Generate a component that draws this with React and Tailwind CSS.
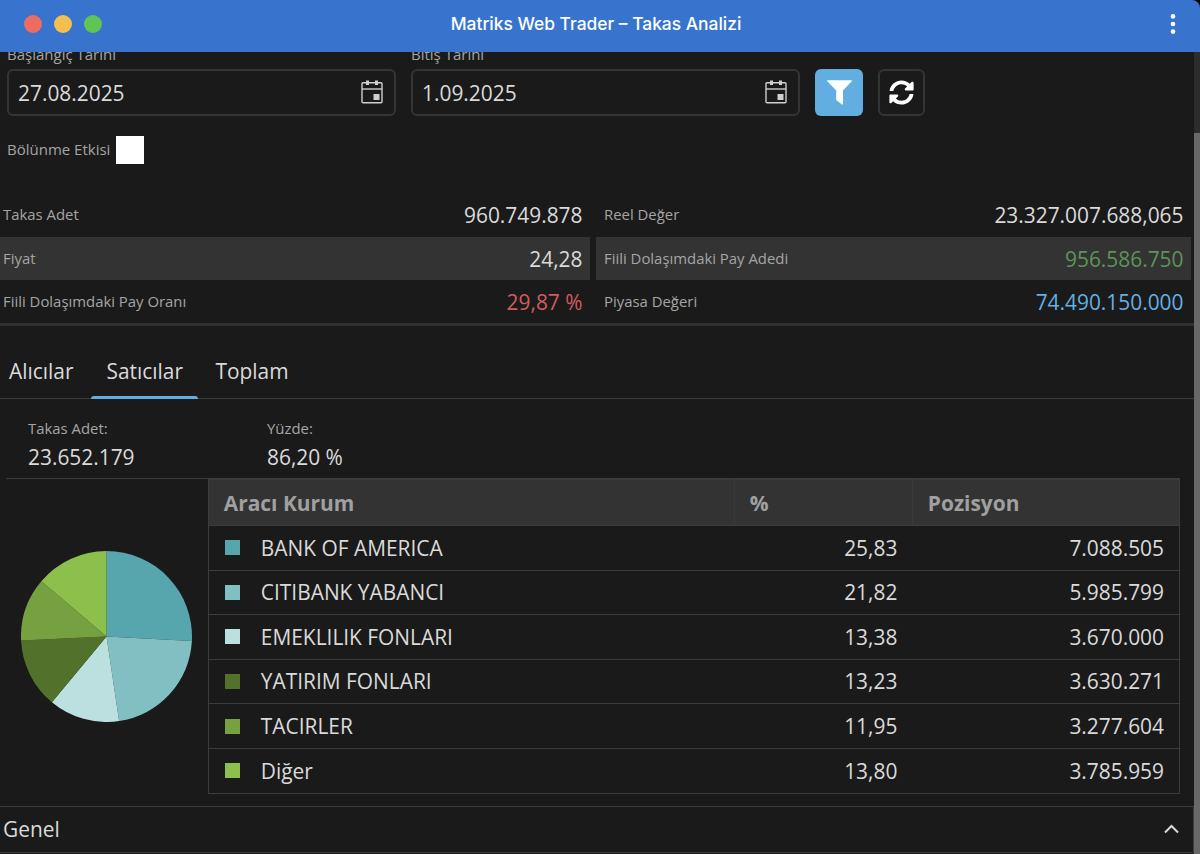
import { FaSyncAlt } from 'react-icons/fa'

const summary = [
  [
    { label: 'Takas Adet', value: '960.749.878', color: 'text-[#dadada]' },
    { label: 'Fiyat', value: '24,28', color: 'text-[#dadada]' },
    { label: 'Fiili Dolaşımdaki Pay Oranı', value: '29,87 %', color: 'text-[#cf5c60]' },
  ],
  [
    { label: 'Reel Değer', value: '23.327.007.688,065', color: 'text-[#dadada]' },
    { label: 'Fiili Dolaşımdaki Pay Adedi', value: '956.586.750', color: 'text-[#5b9557]' },
    { label: 'Piyasa Değeri', value: '74.490.150.000', color: 'text-[#63b0e3]' },
  ],
]

const brokers = [
  { name: 'BANK OF AMERICA', percent: 25.83, position: '7.088.505', bg: 'bg-[#57a6ad]', fill: 'fill-[#57a6ad]' },
  { name: 'CITIBANK YABANCI', percent: 21.82, position: '5.985.799', bg: 'bg-[#81bfc3]', fill: 'fill-[#81bfc3]' },
  { name: 'EMEKLILIK FONLARI', percent: 13.38, position: '3.670.000', bg: 'bg-[#bce0e0]', fill: 'fill-[#bce0e0]' },
  { name: 'YATIRIM FONLARI', percent: 13.23, position: '3.630.271', bg: 'bg-[#52722c]', fill: 'fill-[#52722c]' },
  { name: 'TACIRLER', percent: 11.95, position: '3.277.604', bg: 'bg-[#76a141]', fill: 'fill-[#76a141]' },
  { name: 'Diğer', percent: 13.8, position: '3.785.959', bg: 'bg-[#8cbf4c]', fill: 'fill-[#8cbf4c]' },
]

function CalendarIcon() {
  return (
    <svg className="w-[22px] h-6 mb-0.5" viewBox="0 0 22 24" fill="none">
      <rect x="1" y="2.7" width="20" height="20" rx="1" stroke="#cfcfcf" strokeWidth="1.4" />
      <path d="M1 9h20" stroke="#cfcfcf" strokeWidth="1.4" />
      <path d="M5 .5h3v4.5H5zM14 .5h3v4.5h-3z" fill="#cfcfcf" />
      <path d="M12.5 14h6v6h-6z" fill="#cfcfcf" />
    </svg>
  )
}

function FilterIcon() {
  return (
    <svg className="w-[25px] h-[25px]" viewBox="0 0 25 25" fill="currentColor">
      <path d="M.6.3h23.8c.5 0 .6.5.3.9L16 10.6v13.3c0 .7-.5.9-1 .5l-5.2-3.9c-.4-.3-.6-.6-.6-1.1v-8.8L.3 1.2C0 .8.1.3.6.3z" />
    </svg>
  )
}

function DateField({ label, value }) {
  return (
    <div className="w-[389px]">
      <label className="block text-[15px] leading-5 text-[#a5a5a5]">{label}</label>
      <div className="mt-[5px] h-[47px] border-2 border-[#343434] rounded-md flex items-center justify-between pl-[9px] pr-[11px]">
        <span className="pt-0.5">{value}</span>
        <CalendarIcon />
      </div>
    </div>
  )
}

function PieChart() {
  const total = brokers.reduce((sum, b) => sum + b.percent, 0)
  const point = (share) => {
    const a = (share / total) * Math.PI * 2
    return `${Math.sin(a) * 86} ${-Math.cos(a) * 86}`
  }
  let start = 0
  return (
    <svg className="w-[171px] h-[171px]" viewBox="-86 -86 172 172">
      {brokers.map((b) => {
        const from = start
        start += b.percent
        return <path key={b.name} className={b.fill} d={`M0 0L${point(from)}A86 86 0 0 1 ${point(start)}Z`} />
      })}
    </svg>
  )
}

function TitleBar() {
  return (
    <header className="h-[52px] flex-shrink-0 bg-[#3874cd] rounded-tr-lg grid grid-cols-3 items-center relative z-10">
      <div className="flex gap-3 pl-6 -mt-1">
        <span className="w-[18px] h-[18px] rounded-full bg-[#ee6b60]" />
        <span className="w-[18px] h-[18px] rounded-full bg-[#f5bf4f]" />
        <span className="w-[18px] h-[18px] rounded-full bg-[#61c554]" />
      </div>
      <h1 className="text-center text-white font-['Inter',sans-serif] font-medium text-[17.4px] -mt-[3px] pr-2 whitespace-nowrap">
        Matriks Web Trader – Takas Analizi
      </h1>
      <svg className="w-[6px] h-5 justify-self-end mr-6 -mt-1 fill-white" viewBox="0 0 6 20">
        <circle cx="3" cy="2.4" r="2.3" />
        <circle cx="3" cy="10" r="2.3" />
        <circle cx="3" cy="17.6" r="2.3" />
      </svg>
    </header>
  )
}

function Summary() {
  return (
    <div className="mt-[29px] flex gap-1.5 pr-[3px] border-b-3 border-[#303030]">
      {summary.map((column, i) => (
        <div key={i} className={i === 0 ? 'w-[590px]' : 'flex-1'}>
          {column.map((row, j) => (
            <div
              key={row.label}
              className={`flex items-center justify-between pr-[7.5px] ${i === 0 ? 'pl-[3px]' : 'pl-2'} ${j === 0 ? 'h-11' : 'h-[43px]'} ${j === 1 ? 'bg-[#333333]' : ''}`}
            >
              <span className="text-[14.9px] text-[#a5a5a5] pb-px">{row.label}</span>
              <span className={`pt-0.5 ${row.color}`}>{row.value}</span>
            </div>
          ))}
        </div>
      ))}
    </div>
  )
}

function BrokerTable() {
  return (
    <table className="w-[973px] table-fixed border border-[#3c3c3c] border-collapse">
      <colgroup>
        <col className="w-[526px]" />
        <col className="w-[178px]" />
        <col />
      </colgroup>
      <thead>
        <tr className="h-[46px] bg-[#333333] text-left text-[#a0a0a0]">
          <th className="pl-[15px] pt-0.5 font-bold border-r border-[#393939]">Aracı Kurum</th>
          <th className="pl-[15px] pt-0.5 font-bold border-r border-[#393939]">%</th>
          <th className="pl-[15px] pt-0.5 font-bold">Pozisyon</th>
        </tr>
      </thead>
      <tbody>
        {brokers.map((b) => (
          <tr key={b.name} className="h-[44.6px] border-t border-[#3c3c3c]">
            <td className="pl-4">
              <div className="flex items-center gap-[21px]">
                <span className={`w-[15px] h-[15px] ${b.bg}`} />
                <span className="pt-px">{b.name}</span>
              </div>
            </td>
            <td className="text-right pr-[15px] pt-px">{b.percent.toFixed(2).replace('.', ',')}</td>
            <td className="text-right pr-[15px] pt-px">{b.position}</td>
          </tr>
        ))}
      </tbody>
    </table>
  )
}

export default function App() {
  return (
    <div className="w-[1200px] h-[854px] bg-black overflow-hidden flex flex-col font-['Open_Sans',sans-serif] text-[20.9px] text-[#dadada]">
      <TitleBar />
      <div className="flex-1 min-h-0 flex bg-[#1a1a1a]">
        <main className="w-[1194px] h-full overflow-hidden">
          <div className="-mt-2 pl-[7px] flex items-end gap-[15px]">
            <DateField label="Başlangıç Tarihi" value="27.08.2025" />
            <DateField label="Bitiş Tarihi" value="1.09.2025" />
            <button className="w-12 h-[47px] rounded-md bg-[#62aee1] text-white flex items-center justify-center">
              <FilterIcon />
            </button>
            <button className="w-[47px] h-[47px] rounded-md border-2 border-[#343434] text-white flex items-center justify-center">
              <FaSyncAlt className="w-[25px] h-[25px]" />
            </button>
          </div>

          <div className="mt-5 pl-[7px] h-7 flex items-center gap-1.5">
            <span className="text-[15px] text-[#a5a5a5] pb-0.5">Bölünme Etkisi</span>
            <span className="w-7 h-7 bg-white" />
          </div>

          <Summary />

          <nav className="h-[73px] border-b border-[#3c3c3c] flex items-end">
            <button className="h-[54px] pt-0.5 pl-[9px] pr-[17.5px]">Alıcılar</button>
            <button className="h-[54px] pt-px px-[15.5px] relative">
              Satıcılar
              <span className="absolute inset-x-0 -bottom-px h-[3px] rounded-t bg-[#62aee1]" />
            </button>
            <button className="h-[54px] pt-0.5 px-[17px]">Toplam</button>
          </nav>

          <div className="ml-1.5 w-[1174px]">
            <div className="h-20 pl-[22px] pt-4 flex border-b border-[#3c3c3c]">
              <div className="w-[239px]">
                <div className="text-[14.9px] leading-[26px] text-[#a5a5a5]">Takas Adet:</div>
                <div className="leading-[32px]">23.652.179</div>
              </div>
              <div>
                <div className="text-[14.9px] leading-[26px] text-[#a5a5a5]">Yüzde:</div>
                <div className="leading-[32px]">86,20 %</div>
              </div>
            </div>
            <div className="flex items-center">
              <div className="w-[202px] pl-[15px]">
                <PieChart />
              </div>
              <BrokerTable />
            </div>
          </div>

          <div className="mt-3 h-[47px] border-y border-r border-[#3c3c3c] pl-[3px] pr-[14px] flex items-center justify-between">
            <span className="pt-0.5">Genel</span>
            <svg className="w-[15px] h-[10px]" viewBox="0 0 15 10" fill="none" stroke="#dadada" strokeWidth="2">
              <path d="M1 8.5l6.5-6.5L14 8.5" />
            </svg>
          </div>
        </main>
        <div className="w-1.5 bg-[#2c2c2c] pt-[81px] flex">
          <div className="flex-1 bg-[#686868]" />
        </div>
      </div>
    </div>
  )
}
